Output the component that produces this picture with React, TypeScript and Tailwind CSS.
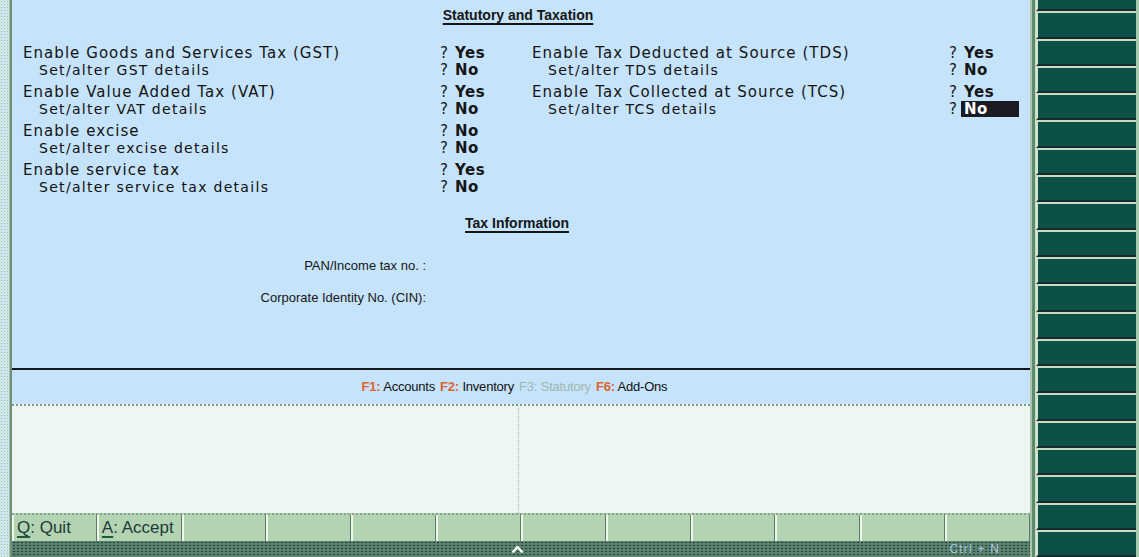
import React from "react";

const labelFont = { fontFamily: '"DejaVu Sans", Verdana, sans-serif' };
const arialFont = { fontFamily: '"Liberation Sans", Arial, sans-serif' };

type Item = { label: string; value: string; sub: string; subValue: string; active?: boolean };

const leftItems: Item[] = [
  { label: "Enable Goods and Services Tax (GST)", value: "Yes", sub: "Set/alter GST details", subValue: "No" },
  { label: "Enable Value Added Tax (VAT)", value: "Yes", sub: "Set/alter VAT details", subValue: "No" },
  { label: "Enable excise", value: "No", sub: "Set/alter excise details", subValue: "No" },
  { label: "Enable service tax", value: "Yes", sub: "Set/alter service tax details", subValue: "No" },
];

const rightItems: Item[] = [
  { label: "Enable Tax Deducted at Source (TDS)", value: "Yes", sub: "Set/alter TDS details", subValue: "No" },
  { label: "Enable Tax Collected at Source (TCS)", value: "Yes", sub: "Set/alter TCS details", subValue: "No", active: true },
];

function Value({ text, active }: { text: string; active?: boolean }) {
  return (
    <div className="flex items-center text-[15px] text-[#161616]">
      <span className="w-[15px]">?</span>
      {active ? (
        <span className="-ml-[3px] h-[16px] w-[58px] bg-[#1b1b24] pl-[3px] font-bold leading-[16px] tracking-[0.5px] text-white">
          {text}
        </span>
      ) : (
        <span className="font-bold tracking-[0.5px]">{text}</span>
      )}
    </div>
  );
}

function Group({ item }: { item: Item }) {
  return (
    <div className="mb-[5px]" style={labelFont}>
      <div className="flex h-[17px] items-center">
        <div className="w-[417px] text-[15px] tracking-[1.05px] text-[#141414]">{item.label}</div>
        <Value text={item.value} />
      </div>
      <div className="flex h-[17px] items-center">
        <div className="w-[417px] pl-[16px] text-[14px] font-medium tracking-[1.3px] text-[#101010]">{item.sub}</div>
        <Value text={item.subValue} active={item.active} />
      </div>
    </div>
  );
}

function FKey({ k, name, disabled }: { k: string; name: string; disabled?: boolean }) {
  return (
    <span className="mr-[5px]">
      <span className={disabled ? "text-[#9fb8ac]" : "font-bold text-[#e0642c]"}>{k}</span>{" "}
      <span className={disabled ? "text-[#9fb8ac]" : "text-[#111]"}>{name}</span>
    </span>
  );
}

function BarButton({ hot, rest }: { hot?: string; rest?: string }) {
  return (
    <div className="flex h-full flex-1 items-center border-l-2 border-r border-l-[#eef7ea] border-r-[#5d7b68] bg-[#b3d3b3] pl-[3px] text-[17px] text-[#1d3a3a]" style={arialFont}>
      {hot && (
        <>
          <span className="underline decoration-[#1f5a3a] decoration-2 underline-offset-[3px]">{hot}</span>
          <span>{rest}</span>
        </>
      )}
    </div>
  );
}

export default function App() {
  return (
    <div className="flex h-[557px] w-[1139px] overflow-hidden bg-[#c5e3fb]">
      {/* left edge strip */}
      <div className="w-[9px] bg-[#cfe4f0] bg-[radial-gradient(#9fcf8f_0.6px,transparent_0.8px)] bg-[length:3px_3px]" />
      <div className="w-[3px] border-l border-[#a6c0a6] bg-[#6f9078]" />

      {/* main column */}
      <div className="flex w-[1018px] flex-col">
        {/* form area */}
        <div className="h-[368px] bg-[#c5e3fb]">
          <div className="mt-[7px] flex h-[16px] justify-center pr-[6px]">
            <span className="text-[14px] font-bold leading-[16px] text-[#161616] underline decoration-2 underline-offset-[3px]" style={arialFont}>
              Statutory and Taxation
            </span>
          </div>

          <div className="mt-[21.5px] flex pl-[11px]">
            <div className="w-[509px]">
              {leftItems.map((it) => (
                <Group key={it.label} item={it} />
              ))}
            </div>
            <div className="flex-1">
              {rightItems.map((it) => (
                <Group key={it.label} item={it} />
              ))}
            </div>
          </div>

          <div className="mt-[14.5px] flex h-[16px] justify-center pr-[8px]">
            <span className="text-[14px] font-bold leading-[16px] text-[#161616] underline decoration-2 underline-offset-[3px]" style={arialFont}>
              Tax Information
            </span>
          </div>

          <div className="mt-[27px] flex flex-col gap-[16px] text-[13px] leading-[16px] text-[#161616]" style={arialFont}>
            <div className="w-[414px] text-right">PAN/Income tax no. :</div>
            <div className="w-[414px] text-right">Corporate Identity No. (CIN):</div>
          </div>
        </div>

        <div className="h-[2px] bg-[#15161c]" />

        {/* function keys row */}
        <div className="flex h-[34px] items-center justify-center pr-[8px] text-[13px] tracking-[-0.2px]" style={arialFont}>
          <FKey k="F1:" name="Accounts" />
          <FKey k="F2:" name="Inventory" />
          <FKey k="F3:" name="Statutory" disabled />
          <FKey k="F6:" name="Add-Ons" />
        </div>

        {/* lower light area */}
        <div className="flex h-[109px] border-t-2 border-dotted border-[#7f9c88] bg-[#edf6f3]">
          <div className="w-[507px] border-r border-dotted border-[#a3b9ad]" />
          <div className="flex-1" />
        </div>

        {/* button bar */}
        <div className="flex h-[28px] border-t-2 border-dotted border-[#86a28c] bg-[#b3d3b3]">
          <BarButton hot="Q" rest=": Quit" />
          <BarButton hot="A" rest=": Accept" />
          {Array.from({ length: 10 }).map((_, i) => (
            <BarButton key={i} />
          ))}
        </div>

        {/* bottom strip */}
        <div className="grid h-[16px] flex-1 grid-cols-3 items-center bg-[#5b806d] bg-[radial-gradient(#1a4538_0.8px,transparent_1px)] bg-[length:4px_3px]">
          <div />
          <div className="flex justify-center pr-[6px]">
            <svg width="13" height="9" viewBox="0 0 13 9">
              <polyline points="1.5,7.5 6.5,2 11.5,7.5" fill="none" stroke="#ffffff" strokeWidth="2.4" />
            </svg>
          </div>
          <div className="pr-[30px] text-right text-[12px] leading-[14px] tracking-[1.2px] text-[#a9c8e6]" style={arialFont}>
            Ctrl + N
          </div>
        </div>
      </div>

      {/* right sidebar */}
      <div className="flex w-[109px] border-l-2 border-[#a9c6ad] bg-[#c2dac0]">
        <div className="w-[3px] bg-[#5f8a6d]" />
        <div className="-mt-[16px] flex flex-1 flex-col overflow-hidden pl-[1px]">
          {Array.from({ length: 21 }).map((_, i) => (
            <div
              key={i}
              className="h-[27.3px] shrink-0 border-b-2 border-l-2 border-t-2 border-b-[#17292a] border-l-[#d3e6cc] border-t-[#c7dcc3] bg-[#0d5047]"
            />
          ))}
        </div>
        <div className="w-[3px] bg-[#a8c8ad]" />
      </div>
    </div>
  );
}
